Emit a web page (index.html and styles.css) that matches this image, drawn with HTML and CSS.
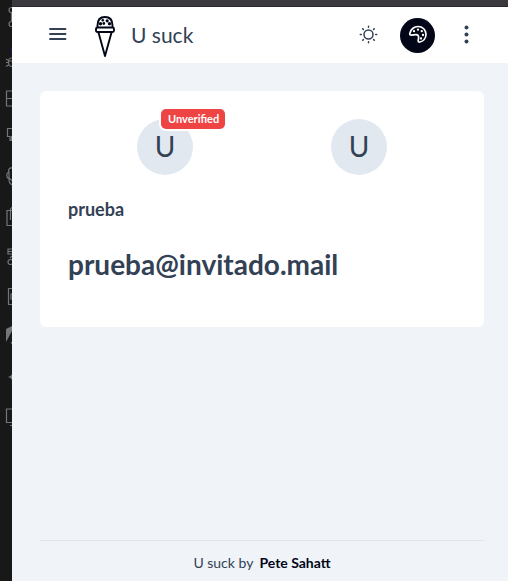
FILE: index.html
```html
<!DOCTYPE html>
<html lang="en">
<head>
<meta charset="utf-8">
<meta name="viewport" content="width=device-width, initial-scale=1">
<title>U suck</title>
<link rel="stylesheet" href="styles.css">
</head>
<body>
<div class="shell">
  <aside class="rail">
    <svg class="rail-icons" width="12" height="440" viewBox="0 0 12 440" fill="none" stroke="#76767a" stroke-width="1.2" aria-hidden="true">
      <circle cx="11.500" cy="10" r="2.500"/><circle cx="11.500" cy="24" r="2.500"/><path d="M11.500 12.500v9"/>
      <path d="M12 58c-3 0-3.500 1-3.500 4s1 4.500 3.500 4.500M6 59l2.500 1.500M6 62.500h3M6 66.500l2.500-1.500M9 61h3"/><path d="M11.500 48v6" stroke="#182050"/>
      <path d="M13 91H6.500v15H13M6.500 98.500H13"/>
      <path d="M13 128.500H7.500v8H10v4h2M11.500 136v5"/>
      <path d="M13 168c-4-1-5 2-4 4-3 1-3 5 0 7 0 4 2 6 5 6M9 172v6l5 4"/>
      <path d="M13 210.500H7v15h6M10.500 220v-11l2-2"/>
      <path d="M12 249H8v5h4M8 251.500h4M10 258l2-2"/><circle cx="10.500" cy="262" r="2.500"/>
      <path d="M13 288.500H8.500v16H13M13 294h-2v5h2"/>
      <path d="M6 329l6-3v5l-6 11z" fill="#76767a" stroke="none"/><path d="M11 342l2 3"/>
      <path d="M6 377c4 0 5-1 6-3v6c-1-2-2-3-6-3z" fill="#76767a" stroke="none"/>
      <path d="M13 409H6.500v13.500H13M10 425.500h3"/>
    </svg>
  </aside>
  <div class="app">
    <div class="window-edge"></div>
    <header class="topbar">
      <button class="icon-button" type="button" aria-label="Toggle menu">
        <svg width="20" height="20" viewBox="0 0 20 20" fill="none" stroke="#334155" stroke-width="1.800" stroke-linecap="round"><path d="M2 4h15.500M2 9h15.500M2 14h15.500"/></svg>
      </button>
      <a class="brand" href="#">
        <svg width="20" height="46" viewBox="0 -4 20 46" fill="none" stroke="#020617" stroke-width="1.900" stroke-linejoin="round">
          <path d="M2.500 11.500V9.500C2.500 4 5.500 1 10 1s7.500 3 7.500 8.500v2"/>
          <rect x="1" y="11.500" width="18" height="4.500" rx="1.500"/>
          <path d="M3.500 16.500L10 40l6.500-23.500"/>
          <g fill="#020617" stroke="none"><circle cx="5.500" cy="7.800" r="1.700"/><circle cx="7.800" cy="4.300" r="1.300"/><circle cx="8.800" cy="7.500" r="1.400"/><circle cx="12.200" cy="4.800" r="1.600"/><circle cx="14.500" cy="7.800" r="1.700"/></g>
        </svg>
        <span>U suck</span>
      </a>
      <nav class="actions" aria-label="Display options">
        <button class="icon-button" type="button" aria-label="Light mode">
          <svg width="20" height="20" viewBox="0 0 20 20" fill="none" stroke="#334155" stroke-width="1.500" stroke-linecap="round"><circle cx="9.500" cy="9.500" r="4.500"/><path d="M9.500 1.300v1M9.500 16.700v1M1.300 9.500h1M16.700 9.500h1M3.700 3.700l.7.700M14.600 14.600l.7.700M3.700 15.300l.7-.7M14.600 4.400l.7-.7"/></svg>
        </button>
        <button class="icon-button palette" type="button" aria-label="Theme palette">
          <svg width="20" height="20" viewBox="0 0 20 20" fill="none" stroke="#fff" stroke-width="1.700" stroke-linejoin="round"><path d="M1.800 8.500C2.500 4.500 6 1.500 10 1.500c4.700 0 8 3.400 8 7.800 0 4.200-2.800 7.200-6.200 7.700-1.200.2-1.800-.6-1.600-1.700l.4-2.300c.3-2.300-1-3.700-3-3.400l-3.800.5c-1.500.2-2.200-.2-2-1.600z"/><g fill="#fff" stroke="none"><circle cx="6" cy="6.200" r="1.150"/><circle cx="10" cy="4.700" r="1.150"/><circle cx="13.800" cy="6.200" r="1.150"/><circle cx="15" cy="10" r="1.150"/><circle cx="13" cy="13.500" r="1.150"/></g></svg>
        </button>
        <button class="icon-button" type="button" aria-label="More options">
          <svg width="20" height="20" viewBox="0 0 20 20" fill="#334155"><circle cx="9.500" cy="2.500" r="2"/><circle cx="9.500" cy="9.500" r="2"/><circle cx="9.500" cy="16.500" r="2"/></svg>
        </button>
      </nav>
    </header>
    <main class="content">
      <section class="card">
        <div class="avatars">
          <div class="avatar">U<span class="badge">Unverified</span></div>
          <div class="avatar">U</div>
        </div>
        <h2 class="name">prueba</h2>
        <h1 class="email">prueba@invitado.mail</h1>
      </section>
    </main>
    <footer class="footer">U suck by <strong>Pete Sahatt</strong></footer>
  </div>
</div>
</body>
</html>
```
FILE: styles.css
```css
* {
  box-sizing: border-box;
}

body {
  margin: 0;
  background: #f0f3f8;
  color: #334155;
  font: 14px/20px Lato, sans-serif;
}

.shell {
  display: flex;
  min-height: 100vh;
}

.rail {
  flex: 0 0 12px;
  background: #181818;
}

.rail-icons {
  display: block;
}

.app {
  flex: 1;
  min-width: 0;
  display: flex;
  flex-direction: column;
}

.window-edge {
  height: 7px;
  background: #3b393e;
  border-bottom: 1px solid #29272b;
}

.topbar {
  display: flex;
  align-items: center;
  height: 56px;
  padding: 0 24px 0 28px;
  background: #fff;
}

.icon-button {
  display: flex;
  align-items: center;
  justify-content: center;
  width: 35px;
  height: 35px;
  padding: 0;
  border: 0;
  border-radius: 50%;
  background: none;
}

.brand {
  display: flex;
  align-items: center;
  gap: 16px;
  margin-left: 20px;
  color: #334155;
  font-size: 21px;
  line-height: 28px;
  text-decoration: none;
}

.actions {
  display: flex;
  gap: 14px;
  margin-left: auto;
}

.palette {
  background: #020617;
}

.content {
  flex: 1;
  padding: 28px 24px 28px 28px;
}

.card {
  padding: 28px 28px 42px;
  border-radius: 6px;
  background: #fff;
}

.avatars {
  display: grid;
  grid-template-columns: 1fr 1fr;
  justify-items: center;
}

.avatar {
  position: relative;
  width: 56px;
  height: 56px;
  border-radius: 50%;
  background: #e2e8f0;
  font-size: 28px;
  line-height: 54px;
  text-align: center;
}

.badge {
  position: absolute;
  top: -10px;
  left: 24px;
  padding: 0 6px 0 7px;
  border-radius: 5px;
  background: #ef4444;
  box-shadow: 0 0 0 2px #fff;
  color: #fff;
  font-size: 11px;
  font-weight: 700;
  line-height: 20px;
}

.name {
  margin: 20px 0;
  font-size: 18px;
  line-height: 28px;
}

.email {
  margin: 0;
  font-size: 28px;
  line-height: 42px;
  overflow-wrap: anywhere;
}

.footer {
  display: flex;
  justify-content: center;
  gap: 6px;
  margin: 0 24px 0 28px;
  padding: 12px 0 8px;
  border-top: 1px solid #dfe6f0;
}

.footer strong {
  color: #020617;
}
```
